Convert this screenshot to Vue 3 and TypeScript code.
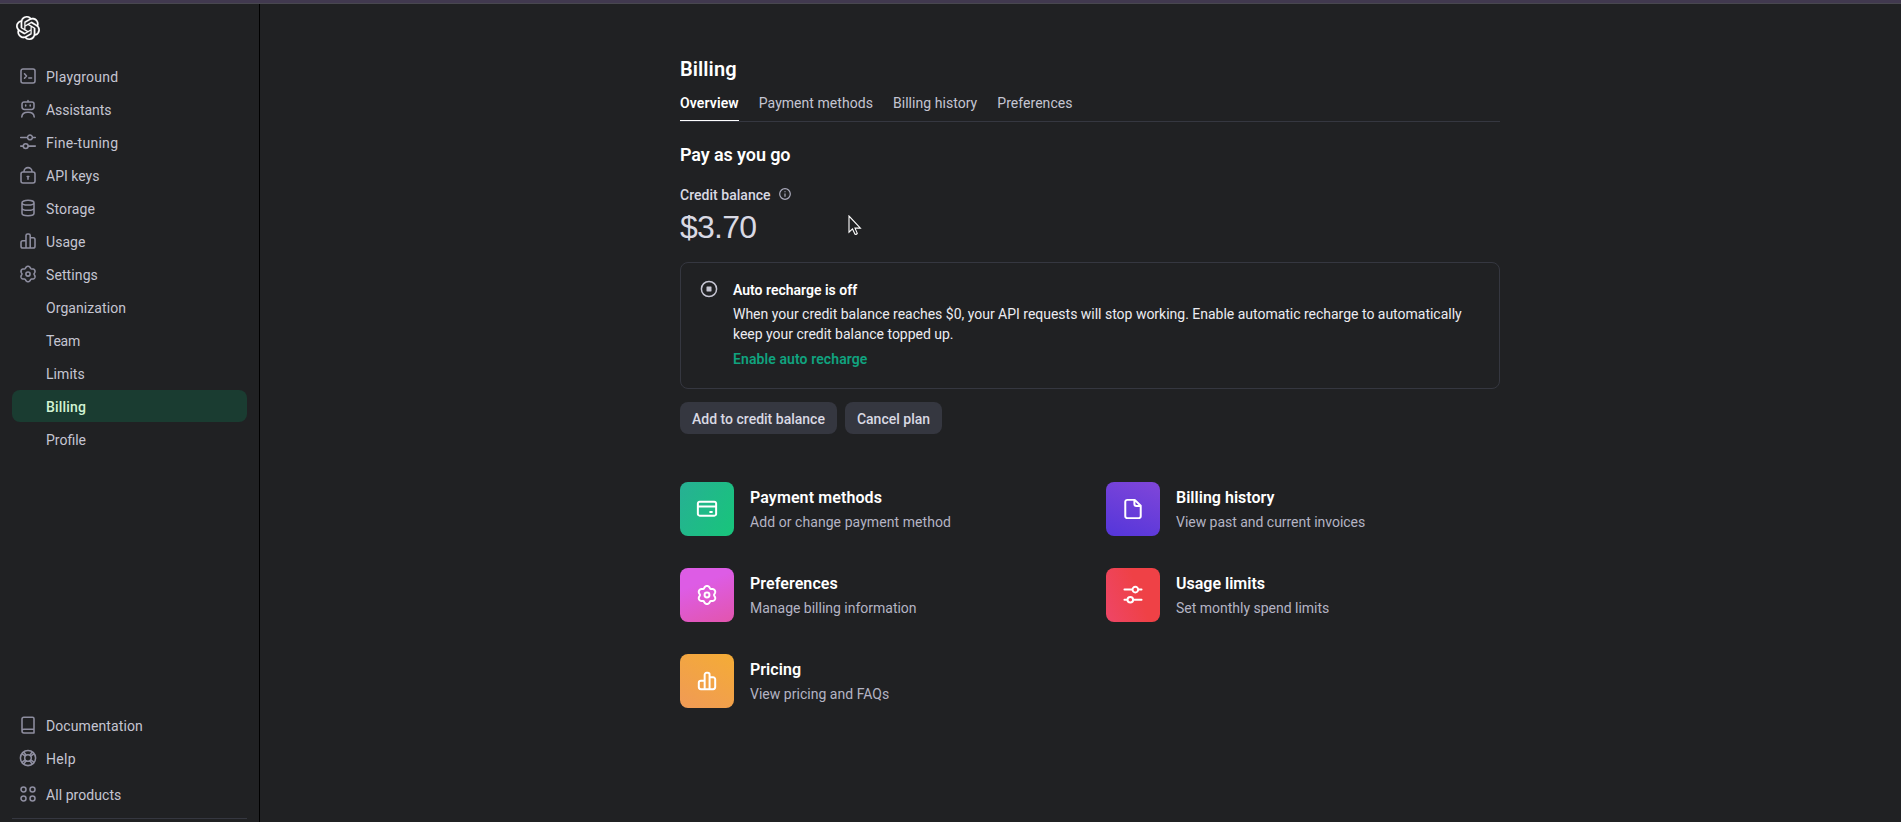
<script setup lang="ts">
interface NavItem {
  label: string
  icon?: string
  active?: boolean
  tracking: number
}
interface Feature {
  title: string
  text: string
  icon: string
  tone: string
  titleTracking: number
  textTracking: number
}

const mainNav: NavItem[] = [
  { label: 'Playground', icon: 'terminal', tracking: 0.22 },
  { label: 'Assistants', icon: 'robot', tracking: -0.05 },
  { label: 'Fine-tuning', icon: 'sliders', tracking: 0.28 },
  { label: 'API keys', icon: 'lock', tracking: 0 },
  { label: 'Storage', icon: 'database', tracking: 0.14 },
  { label: 'Usage', icon: 'bars', tracking: 0.05 },
  { label: 'Settings', icon: 'gear', tracking: 0.1 },
  { label: 'Organization', tracking: 0.08 },
  { label: 'Team', tracking: -0.25 },
  { label: 'Limits', tracking: 0.06 },
  { label: 'Billing', active: true, tracking: 0.2 },
  { label: 'Profile', tracking: 0 },
]
const footNav: NavItem[] = [
  { label: 'Documentation', icon: 'book', tracking: 0.1 },
  { label: 'Help', icon: 'help', tracking: 0.3 },
  { label: 'All products', icon: 'grid', tracking: 0.06 },
]
const tabs = ['Overview', 'Payment methods', 'Billing history', 'Preferences']
const features: Feature[] = [
  { title: 'Payment methods', text: 'Add or change payment method', icon: 'card', tone: 'green', titleTracking: 0.1, textTracking: 0.065 },
  { title: 'Billing history', text: 'View past and current invoices', icon: 'file', tone: 'purple', titleTracking: 0.02, textTracking: -0.027 },
  { title: 'Preferences', text: 'Manage billing information', icon: 'gear', tone: 'pink', titleTracking: 0.08, textTracking: -0.01 },
  { title: 'Usage limits', text: 'Set monthly spend limits', icon: 'sliders', tone: 'red', titleTracking: 0, textTracking: -0.01 },
  { title: 'Pricing', text: 'View pricing and FAQs', icon: 'bars', tone: 'orange', titleTracking: 0.05, textTracking: 0.024 },
]

// Six-lobed gear outline around (9, 9)
const gear = (() => {
  const pts: string[] = []
  for (let i = 0; i < 120; i++) {
    const a = (i / 120) * Math.PI * 2
    const r = 7 - 0.85 * Math.cos(6 * a) - 0.12 * Math.cos(12 * a)
    pts.push(`${(9 + r * Math.cos(a)).toFixed(2)} ${(9 + r * Math.sin(a)).toFixed(2)}`)
  }
  return `M${pts.join('L')}Z`
})()

// All icons share an 18 x 18 grid
const icons: Record<string, string> = {
  terminal: 'M4 2H14A2 2 0 0 1 16 4V14A2 2 0 0 1 14 16H4A2 2 0 0 1 2 14V4A2 2 0 0 1 4 2ZM5.5 6.8L7.5 9L5.5 11.2M9.8 10.9H12.6',
  robot: 'M9 .4V2M5 2H13A2 2 0 0 1 15 4V7A2.5 2.5 0 0 1 12.5 9.4H5.5A2.5 2.5 0 0 1 3 7V4A2 2 0 0 1 5 2ZM6.7 4.9V6M11.2 4.9V6M2.8 17C3 13.8 5.6 12.3 9 12.3S15 13.8 15.2 17',
  sliders: 'M1.7 4.4H8.6M13.4 4.4H16.3M13.4 4.4A2.4 2.4 0 1 1 8.6 4.4A2.4 2.4 0 1 1 13.4 4.4M1.7 13.1H4.3M9.1 13.1H16.3M9.1 13.1A2.4 2.4 0 1 1 4.3 13.1A2.4 2.4 0 1 1 9.1 13.1',
  lock: 'M4 6H14A2 2 0 0 1 16 8V15A2 2 0 0 1 14 17H4A2 2 0 0 1 2 15V8A2 2 0 0 1 4 6ZM5 6V5.6A4 4 0 0 1 13 5.6V6M9 10.5V13.2M8.2 10.5H9.8',
  database: 'M15 3.7C15 5 12.3 6 9 6S3 5 3 3.7S5.7 1.2 9 1.2S15 2.4 15 3.7ZM3 3.7V14.3C3 15.7 5.7 16.7 9 16.7S15 15.7 15 14.3V3.7M3 9C3 10.3 5.7 11.3 9 11.3S15 10.3 15 9',
  bars: 'M7 16V3.6A1.6 1.6 0 0 1 8.6 2H9.6A1.6 1.6 0 0 1 11.2 3.6V16M7 8.8H3.8A1.8 1.8 0 0 0 2 10.6V14.2A1.8 1.8 0 0 0 3.8 16H14.2A1.8 1.8 0 0 0 16 14.2V7.6A1.8 1.8 0 0 0 14.2 5.8H11.2',
  gear: `${gear}M11.1 9A2.1 2.1 0 1 1 6.9 9A2.1 2.1 0 1 1 11.1 9`,
  book: 'M4.8 1.2H13.5A1.5 1.5 0 0 1 15 2.7V16.9H4.8A1.8 1.8 0 0 1 3 15.1V3A1.8 1.8 0 0 1 4.8 1.2ZM3 15.1A1.8 1.8 0 0 1 4.8 13.3H15',
  help: 'M16.6 9A7.6 7.6 0 1 1 1.4 9A7.6 7.6 0 1 1 16.6 9M12.3 9A3.3 3.3 0 1 1 5.7 9A3.3 3.3 0 1 1 12.3 9M2.8 4.6L6.2 7.2M4.6 2.8L7.2 6.2M13.4 2.8L10.8 6.2M15.2 4.6L11.8 7.2M2.8 13.4L6.2 10.8M4.6 15.2L7.2 11.8M13.4 15.2L10.8 11.8M15.2 13.4L11.8 10.8',
  grid: 'M7 4.5A2.5 2.5 0 1 1 2 4.5A2.5 2.5 0 1 1 7 4.5M16 4.5A2.5 2.5 0 1 1 11 4.5A2.5 2.5 0 1 1 16 4.5M7 13.4A2.5 2.5 0 1 1 2 13.4A2.5 2.5 0 1 1 7 13.4M16 13.4A2.5 2.5 0 1 1 11 13.4A2.5 2.5 0 1 1 16 13.4',
  card: 'M2.7 2.8H15.3A1.5 1.5 0 0 1 16.8 4.3V13.2A1.5 1.5 0 0 1 15.3 14.7H2.7A1.5 1.5 0 0 1 1.2 13.2V4.3A1.5 1.5 0 0 1 2.7 2.8ZM1.2 6.8H16.8M11.7 11.5H13.2',
  file: 'M10.5 1.2H4.1A1.7 1.7 0 0 0 2.4 2.9V15.1A1.7 1.7 0 0 0 4.1 16.8H13.9A1.7 1.7 0 0 0 15.6 15.1V6.2ZM10.2 1.4V4.8A1.7 1.7 0 0 0 11.9 6.5H15.4',
}
</script>

<template>
  <div class="app">
    <div class="strip"></div>
    <div class="body">
      <aside class="sidebar">
        <svg class="logo" viewBox="0 0 24 24">
          <path d="M22.2819 9.8211a5.9847 5.9847 0 0 0-.5157-4.9108 6.0462 6.0462 0 0 0-6.5098-2.9A6.0651 6.0651 0 0 0 4.9807 4.1818a5.9847 5.9847 0 0 0-3.9977 2.9 6.0462 6.0462 0 0 0 .7427 7.0966 5.98 5.98 0 0 0 .511 4.9107 6.051 6.051 0 0 0 6.5146 2.9001A5.9847 5.9847 0 0 0 13.2599 24a6.0557 6.0557 0 0 0 5.7718-4.2058 5.9894 5.9894 0 0 0 3.9977-2.9001 6.0557 6.0557 0 0 0-.7475-7.0729zm-9.022 12.6081a4.4755 4.4755 0 0 1-2.8764-1.0408l.1419-.0804 4.7783-2.7582a.7948.7948 0 0 0 .3927-.6813v-6.7369l2.02 1.1686a.071.071 0 0 1 .038.052v5.5826a4.504 4.504 0 0 1-4.4945 4.4944zm-9.6607-4.1254a4.4708 4.4708 0 0 1-.5346-3.0137l.142.0852 4.783 2.7582a.7712.7712 0 0 0 .7806 0l5.8428-3.3685v2.3324a.0804.0804 0 0 1-.0332.0615L9.74 19.9502a4.4992 4.4992 0 0 1-6.1408-1.6464zM2.3408 7.8956a4.485 4.485 0 0 1 2.3655-1.9728V11.6a.7664.7664 0 0 0 .3879.6765l5.8144 3.3543-2.0201 1.1685a.0757.0757 0 0 1-.071 0l-4.8303-2.7865A4.504 4.504 0 0 1 2.3408 7.872zm16.5963 3.8558L13.1038 8.364 15.1192 7.2a.0757.0757 0 0 1 .071 0l4.8303 2.7913a4.4944 4.4944 0 0 1-.6765 8.1042v-5.6772a.79.79 0 0 0-.407-.667zm2.0107-3.0231l-.142-.0852-4.7735-2.7818a.7759.7759 0 0 0-.7854 0L9.409 9.2297V6.8974a.0662.0662 0 0 1 .0284-.0615l4.8303-2.7866a4.4992 4.4992 0 0 1 6.6802 4.66zM8.3065 12.863l-2.02-1.1638a.0804.0804 0 0 1-.038-.0567V6.0742a4.4992 4.4992 0 0 1 7.3757-3.4537l-.142.0805L8.704 5.459a.7948.7948 0 0 0-.3927.6813zm1.0976-2.3654l2.602-1.4998 2.6069 1.4998v2.9994l-2.5974 1.4997-2.6067-1.4997Z" />
        </svg>
        <nav class="nav">
          <a v-for="item in mainNav" :key="item.label" class="nav-item" :class="{ active: item.active }">
            <span class="nav-icon">
              <svg v-if="item.icon" class="line-icon" viewBox="0 0 18 18"><path :d="icons[item.icon]" /></svg>
            </span>
            <span class="nav-label" :style="{ letterSpacing: item.tracking + 'px' }">{{ item.label }}</span>
          </a>
        </nav>
        <nav class="nav foot">
          <a v-for="item in footNav" :key="item.label" class="nav-item">
            <span class="nav-icon">
              <svg v-if="item.icon" class="line-icon" viewBox="0 0 18 18"><path :d="icons[item.icon]" /></svg>
            </span>
            <span class="nav-label" :style="{ letterSpacing: item.tracking + 'px' }">{{ item.label }}</span>
          </a>
        </nav>
        <div class="divider"></div>
      </aside>

      <main class="content">
        <h1>Billing</h1>
        <div class="tabs">
          <a v-for="(tab, i) in tabs" :key="tab" class="tab" :class="{ current: i === 0 }">{{ tab }}</a>
        </div>

        <h2>Pay as you go</h2>
        <div class="balance-label">
          <span>Credit balance</span>
          <svg class="info" viewBox="0 0 12 12">
            <circle cx="6" cy="6" r="5.3" />
            <path d="M6 5.4V8.7M6 3.2V4.3" />
          </svg>
        </div>
        <div class="balance">$3.70</div>

        <section class="notice">
          <svg class="stop" viewBox="0 0 18 18">
            <circle cx="9" cy="9" r="7.6" />
            <rect x="6.5" y="6.5" width="5" height="5" rx=".4" />
          </svg>
          <div>
            <div class="notice-title">Auto recharge is off</div>
            <p>When your credit balance reaches $0, your API requests will stop working. Enable automatic recharge to automatically keep your credit balance topped up.</p>
            <a class="notice-link">Enable auto recharge</a>
          </div>
        </section>

        <div class="actions">
          <button class="add">Add to credit balance</button>
          <button class="cancel">Cancel plan</button>
        </div>

        <div class="features">
          <a v-for="f in features" :key="f.title" class="feature">
            <span class="tile" :class="f.tone">
              <svg class="tile-icon" viewBox="-0.4 -0.4 18.8 18.8"><path :d="icons[f.icon]" /></svg>
            </span>
            <span class="feature-text">
              <span class="feature-title" :style="{ letterSpacing: f.titleTracking + 'px' }">{{ f.title }}</span>
              <span class="feature-desc" :style="{ letterSpacing: f.textTracking + 'px' }">{{ f.text }}</span>
            </span>
          </a>
        </div>
      </main>
    </div>

    <svg class="cursor" viewBox="0 0 14 21">
      <path d="M1 1V17.2L4.5 13.9L7 19.3Q8.6 19.6 9.3 18.4L7 13.1H12.4Z" />
    </svg>
  </div>
</template>

<style>
body {
  background: #202123;
  overflow: hidden;
}
</style>

<style scoped>
.app {
  height: 822px;
  display: flex;
  flex-direction: column;
  overflow: hidden;
  font-family: Roboto, "Liberation Sans", sans-serif;
  font-size: 14px;
  line-height: 20px;
  color: #fff;
  background: #202123;
}
.strip {
  height: 3px;
  flex: none;
  background: #41394f;
  border-bottom: 1px solid #48474f;
}
.body {
  flex: 1;
  min-height: 0;
  display: flex;
}
.sidebar {
  box-sizing: border-box;
  width: 260px;
  flex: none;
  display: flex;
  flex-direction: column;
  padding: 12px 12px 3px;
  border-right: 1px solid #000;
}
.logo {
  width: 24px;
  height: 24px;
  flex: none;
  margin-left: 4px;
  fill: #fff;
  stroke: #fff;
  stroke-width: 0.2;
}
.nav {
  display: flex;
  flex-direction: column;
  gap: 1px;
  margin-top: 20px;
}
.foot {
  margin-top: auto;
}
.foot .nav-item:last-child {
  margin-top: 3px;
}
.nav-item {
  box-sizing: border-box;
  height: 32px;
  display: flex;
  align-items: center;
  gap: 9px;
  padding-left: 7px;
  border-radius: 8px;
  color: #c5c5d2;
}
.nav-item.active {
  background: #1a3c31;
  color: #d2f4d3;
  font-weight: 500;
}
.nav-icon {
  width: 18px;
  height: 18px;
}
.nav-label {
  padding-top: 2px;
}
.line-icon {
  display: block;
  width: 18px;
  height: 18px;
  overflow: visible;
  fill: none;
  stroke: #8e8ea0;
  stroke-width: 1.55;
  stroke-linecap: round;
  stroke-linejoin: round;
}
.divider {
  height: 1px;
  flex: none;
  margin-top: 8px;
  background: #353740;
}
.content {
  width: 820px;
  padding: 51px 0 0 420px;
}
h1,
h2,
p {
  margin: 0;
}
h1 {
  font-size: 20px;
  line-height: 28px;
  font-weight: 600;
  letter-spacing: 0.08px;
}
.tabs {
  display: flex;
  gap: 20px;
  margin-top: 10px;
  border-bottom: 1px solid #353740;
}
.tab {
  padding-bottom: 7px;
  border-bottom: 1px solid transparent;
  color: #c5c5d2;
  letter-spacing: 0.045px;
}
.tab.current {
  border-color: #fff;
  color: #fff;
  font-weight: 600;
  letter-spacing: 0.12px;
}
h2 {
  margin-top: 21px;
  font-size: 18px;
  line-height: 24px;
  font-weight: 600;
  letter-spacing: -0.1px;
}
.balance-label {
  display: flex;
  margin-top: 18px;
  font-weight: 500;
  letter-spacing: 0.03px;
  color: #d9d9e3;
  gap: 8px;
}
.info {
  width: 12px;
  height: 12px;
  margin-top: 3px;
  fill: none;
  stroke: #acacbe;
  stroke-width: 1.2;
}
.balance {
  margin-top: 2px;
  font-family: "Liberation Sans", Roboto, sans-serif;
  font-size: 32px;
  line-height: 40px;
  letter-spacing: -0.75px;
  color: #d9d9e3;
}
.notice {
  box-sizing: border-box;
  height: 127px;
  display: flex;
  gap: 15px;
  margin-top: 15px;
  padding: 17px 30px 0 19px;
  border: 1px solid #353740;
  border-radius: 8px;
}
.stop {
  width: 18px;
  height: 18px;
  flex: none;
  fill: none;
  stroke: #c5c5d2;
  stroke-width: 1.5;
}
.stop rect {
  fill: #c5c5d2;
  stroke: none;
}
.notice-title {
  font-weight: 600;
}
.notice p {
  margin: 4px 0 5px;
  letter-spacing: -0.012px;
  color: #ececf1;
}
.notice-link {
  font-weight: 600;
  letter-spacing: 0.1px;
  color: #10a37f;
}
.actions {
  display: flex;
  gap: 8px;
  margin-top: 13px;
}
button {
  height: 32px;
  padding: 1px 0 0;
  border: 0;
  border-radius: 8px;
  background: #353740;
  color: #d9d9e3;
  font: 500 14px/20px Roboto, "Liberation Sans", sans-serif;
}
.add {
  width: 157px;
}
.cancel {
  width: 97px;
}
.features {
  display: grid;
  grid-template-columns: 1fr 1fr;
  gap: 32px;
  margin-top: 48px;
}
.feature {
  display: flex;
  gap: 16px;
}
.tile {
  width: 54px;
  height: 54px;
  display: flex;
  align-items: center;
  justify-content: center;
  border-radius: 8px;
}
.green { background: linear-gradient(120deg, #27b094, #19c37d 90%); }
.purple { background: linear-gradient(20deg, #5436da, #8046d9); }
.pink { background: linear-gradient(160deg, #dd5ce5 30%, #e255ad); }
.red { background: linear-gradient(70deg, #ee4667, #ef4146 60%); }
.orange { background: linear-gradient(30deg, #f09a56, #f4ac36); }
.tile-icon {
  width: 22px;
  height: 22px;
  overflow: visible;
  fill: none;
  stroke: #fff;
  stroke-width: 1.7;
  stroke-linecap: round;
  stroke-linejoin: round;
}
.feature-text {
  display: flex;
  flex-direction: column;
  gap: 2px;
  padding-top: 4px;
}
.feature-title {
  font-size: 16px;
  line-height: 24px;
  font-weight: 600;
}
.feature-desc {
  color: #b4b4c4;
}
.cursor {
  position: absolute;
  left: 848px;
  top: 215px;
  width: 14px;
  height: 21px;
  fill: #202123;
  stroke: #fff;
  stroke-width: 1.1;
}
</style>
